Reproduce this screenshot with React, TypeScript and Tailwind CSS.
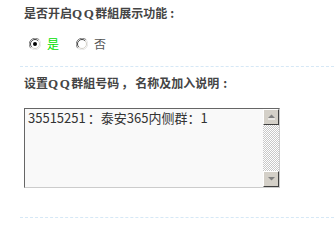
import React from "react";

function Radio({ checked }: { checked: boolean }) {
  return (
    <svg width="12" height="12" viewBox="0 0 12 12" className="shrink-0">
      <circle cx="6" cy="6" r="5" fill="#fff" />
      <path d="M1.76 10.24 A6 6 0 0 1 10.24 1.76" fill="none" stroke="#808080" strokeWidth="1" />
      <path d="M10.24 1.76 A6 6 0 0 1 1.76 10.24" fill="none" stroke="#e8e8e8" strokeWidth="1" />
      <path d="M2.8 9.2 A4.5 4.5 0 0 1 9.2 2.8" fill="none" stroke="#404040" strokeWidth="1" />
      <path d="M9.2 2.8 A4.5 4.5 0 0 1 2.8 9.2" fill="none" stroke="#d4d0c8" strokeWidth="1" />
      {checked && <circle cx="6" cy="6" r="2" fill="#000" />}
    </svg>
  );
}

function ScrollBtn({ up }: { up: boolean }) {
  return (
    <div className="w-4 h-4 bg-[#d4d0c8] border-t border-l border-t-[#fff] border-l-[#fff] border-b border-r border-b-[#404040] border-r-[#404040] flex items-center justify-center">
      <svg width="9" height="6" viewBox="0 0 9 6">
        {up ? (
          <>
            <path d="M1 4 L4.5 0.5 L8 4 Z" fill="#808080" />
            <path d="M1 5 L8 5" stroke="#fff" strokeWidth="1" />
          </>
        ) : (
          <path d="M1 1 L4.5 4.5 L8 1 Z" fill="#808080" />
        )}
      </svg>
    </div>
  );
}

export default function App() {
  const font = "font-['Noto_Sans_CJK_SC','Noto_Sans',sans-serif]";
  return (
    <div className={`w-[334px] h-[222px] bg-white overflow-hidden ${font}`}>
      <div className="pl-5 pt-[5px]">
        <div className="pl-1 h-4 leading-4 text-[12px] font-bold text-[#444]">
          是否开启<span className="font-['Liberation_Serif'] text-[13px] tracking-[1.5px]">QQ</span>群組展示功能<span className="ml-[3px]">:</span>
        </div>
        <div className="pl-[9px] mt-[15px] h-4 flex items-center text-[12px] leading-4">
          <Radio checked />
          <span className="ml-[6px] text-[#00e000]">是</span>
          <span className="ml-[17px] flex">
            <Radio checked={false} />
          </span>
          <span className="ml-[6px] text-[#555]">否</span>
        </div>
        <div className="mt-[14px] border-t border-dashed border-[#d6e8f6]" />
        <div className="mt-[8px] pl-1 h-4 leading-4 text-[12px] font-bold text-[#444]">
          设置<span className="font-['Liberation_Serif'] text-[13px] tracking-[1.5px]">QQ</span>群組号码<span className="ml-[2px] mr-[2px]">，</span>名称及加入说明<span className="ml-[4px]">:</span>
        </div>
        <div className="ml-1 mt-[17px] w-[256px] h-[80px] bg-[#f9f9f9] border-t border-l border-t-[#666] border-l-[#666] border-b border-r border-b-[#cccccc] border-r-[#cccccc] flex">
          <div className="flex-1 pl-[3px] pt-px text-[13px] leading-4 text-[#333]">
            35515251<span className="ml-[2px]">：</span>泰安365内侧群：1
          </div>
          <div className="w-4 flex flex-col">
            <ScrollBtn up />
            <div className="flex-1 bg-[repeating-conic-gradient(#c8c8c8_0_25%,#ffffff_0_50%)] bg-[length:2px_2px]" />
            <ScrollBtn up={false} />
          </div>
        </div>
        <div className="mt-[29px] border-t border-dashed border-[#d6e8f6]" />
      </div>
    </div>
  );
}
